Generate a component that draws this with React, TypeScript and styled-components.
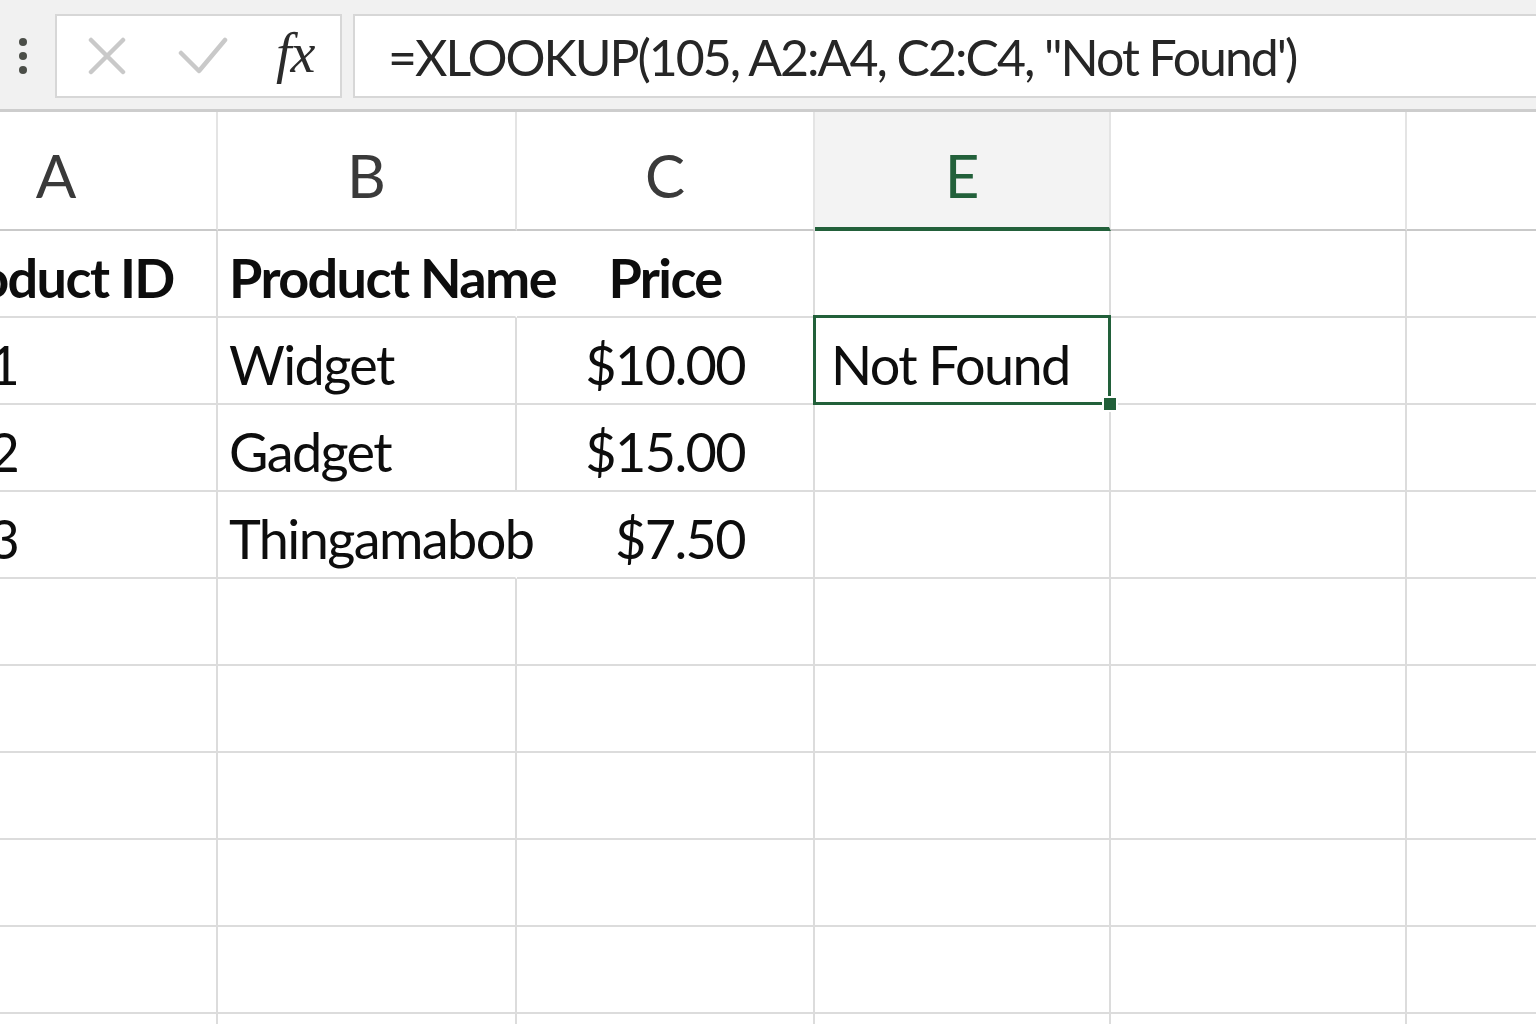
import React from 'react';
import styled, { createGlobalStyle, css } from 'styled-components';

const GREEN = '#22603a';
const GRID = '#dcdcdc';
const FONT = `Lato, "Open Sans", "Liberation Sans", sans-serif`;

const GlobalStyle = createGlobalStyle`
  html, body {
    margin: 0;
    padding: 0;
    background: #ffffff;
    overflow: hidden;
  }
  body {
    font-family: ${FONT};
    color: #111;
  }
`;

type Align = 'left' | 'right' | 'center';

interface IColumn {
  key: string;
  width: number;
  align: Align;
  padLeft: number;
  padRight: number;
  labelShift?: number;
}

const columns: IColumn[] = [
  { key: 'A', width: 300, align: 'left', padLeft: 11, padRight: 11, labelShift: 22 },
  { key: 'B', width: 299, align: 'left', padLeft: 11, padRight: 11 },
  { key: 'C', width: 298, align: 'right', padLeft: 11, padRight: 68 },
  { key: 'E', width: 296, align: 'left', padLeft: 16, padRight: 11 },
  { key: '', width: 296, align: 'left', padLeft: 11, padRight: 11 },
  { key: '', width: 296, align: 'left', padLeft: 11, padRight: 11 },
];

const rows: string[][] = [
  ['Product ID', 'Product Name', 'Price', '', '', ''],
  ['101', 'Widget', '$10.00', 'Not Found', '', ''],
  ['102', 'Gadget', '$15.00', '', '', ''],
  ['103', 'Thingamabob', '$7.50', '', '', ''],
  ['', '', '', '', '', ''],
  ['', '', '', '', '', ''],
  ['', '', '', '', '', ''],
  ['', '', '', '', '', ''],
  ['', '', '', '', '', ''],
  ['', '', '', '', '', ''],
];

// overflowing text hides the gridline on its right
const spills = new Set(['0-1', '3-1']);
const selected = '1-3';

const Page = styled.div`
  width: 1536px;
  height: 1024px;
  overflow: hidden;
  display: flex;
  flex-direction: column;
`;

const Toolbar = styled.div`
  flex: none;
  height: 112px;
  box-sizing: border-box;
  padding-top: 14px;
  display: flex;
  align-items: flex-start;
  background: #f1f1f1;
  border-bottom: 3px solid #cdcdcd;
`;

const Grip = styled.div`
  width: 46px;
  height: 84px;
  display: flex;
  flex-direction: column;
  align-items: center;
  justify-content: center;
  gap: 6px;
`;

const Dot = styled.span`
  width: 8px;
  height: 8px;
  border-radius: 50%;
  background: #4b4e48;
`;

const EditBox = styled.div`
  margin-left: 9px;
  width: 287px;
  height: 84px;
  box-sizing: border-box;
  background: #ffffff;
  border: 2px solid #d7d7d7;
  display: flex;
  align-items: center;
  padding-left: 31px;
`;

const IconSlot = styled.span<{ $gap: number }>`
  display: flex;
  align-items: center;
  margin-right: ${({ $gap }) => $gap}px;
`;

const Fx = styled.span`
  font-family: "Liberation Serif", "DejaVu Serif", serif;
  font-style: italic;
  font-size: 56px;
  line-height: 1;
  color: #2b2b2b;
  margin-top: -6px;
  letter-spacing: -1px;
`;

const FormulaBox = styled.div`
  margin-left: 11px;
  margin-right: -6px;
  flex: 1;
  height: 84px;
  box-sizing: border-box;
  background: #ffffff;
  border: 2px solid #d7d7d7;
  display: flex;
  align-items: center;
  padding-left: 33px;
`;

const FormulaText = styled.span`
  font-size: 50px;
  letter-spacing: -2px;
  color: #262626;
  white-space: nowrap;
  margin-top: 2px;
`;

const Viewport = styled.div`
  flex: 1;
  overflow: hidden;
`;

const Sheet = styled.div<{ $template: string }>`
  display: grid;
  grid-template-columns: ${({ $template }) => $template};
  grid-template-rows: 119px;
  grid-auto-rows: 87px;
  margin-left: -82px;
  width: max-content;
`;

const HeaderCell = styled.div<{ $active: boolean; $shift: number }>`
  box-sizing: border-box;
  display: flex;
  align-items: center;
  justify-content: center;
  padding-top: 8px;
  padding-right: ${({ $shift }) => $shift}px;
  font-size: 60px;
  color: #3a3a3a;
  border-right: 2px solid #e4e4e4;
  border-bottom: 2px solid #c9c9c9;
  background: #ffffff;
  ${({ $active }) =>
    $active &&
    css`
      background: #f3f3f3;
      color: ${GREEN};
      border-bottom: 4px solid ${GREEN};
      padding-top: 10px;
    `}
`;

const Cell = styled.div<{
  $align: Align;
  $bold: boolean;
  $spill: boolean;
  $active: boolean;
  $padLeft: number;
  $padRight: number;
}>`
  position: relative;
  box-sizing: border-box;
  display: flex;
  align-items: center;
  justify-content: ${({ $align }) =>
    $align === 'right' ? 'flex-end' : $align === 'center' ? 'center' : 'flex-start'};
  padding: 8px ${({ $padRight }) => $padRight}px 0 ${({ $padLeft }) => $padLeft}px;
  font-size: 54px;
  font-weight: ${({ $bold }) => ($bold ? 700 : 400)};
  letter-spacing: -1.6px;
  color: #0d0d0d;
  white-space: nowrap;
  border-right: 2px solid ${({ $spill }) => ($spill ? 'transparent' : GRID)};
  border-bottom: 2px solid ${GRID};
  overflow: ${({ $spill, $active }) => ($spill || $active ? 'visible' : 'hidden')};
  z-index: ${({ $spill, $active }) => ($active ? 2 : $spill ? 1 : 0)};
`;

const SelectionFrame = styled.div`
  position: absolute;
  top: -3px;
  left: -2px;
  right: -2px;
  bottom: -2px;
  border: 3px solid ${GREEN};
  pointer-events: none;
`;

const FillHandle = styled.span`
  position: absolute;
  right: -10px;
  bottom: -10px;
  width: 12px;
  height: 12px;
  background: ${GREEN};
  border: 2px solid #ffffff;
`;

const CloseIcon = () => (
  <svg width="38" height="38" viewBox="0 0 38 38">
    <path d="M3 3 L35 35 M35 3 L3 35" stroke="#c9c9c9" strokeWidth="4.5" strokeLinecap="round" />
  </svg>
);

const CheckIcon = () => (
  <svg width="50" height="38" viewBox="0 0 50 38">
    <path d="M3 16 L21 34 L47 3" fill="none" stroke="#c9c9c9" strokeWidth="4.5" strokeLinecap="round" strokeLinejoin="round" />
  </svg>
);

const App = () => {
  const template = columns.map((c) => `${c.width}px`).join(' ');

  return (
    <Page>
      <GlobalStyle />
      <Toolbar>
        <Grip>
          <Dot />
          <Dot />
          <Dot />
        </Grip>
        <EditBox>
          <IconSlot $gap={52}>
            <CloseIcon />
          </IconSlot>
          <IconSlot $gap={48}>
            <CheckIcon />
          </IconSlot>
          <Fx>fx</Fx>
        </EditBox>
        <FormulaBox>
          <FormulaText>=XLOOKUP(105, A2:A4, C2:C4, "Not Found')</FormulaText>
        </FormulaBox>
      </Toolbar>

      <Viewport>
        <Sheet $template={template}>
          {columns.map((col, idx) => (
            <HeaderCell key={`h-${idx}`} $active={col.key === 'E'} $shift={col.labelShift || 0}>
              {col.key}
            </HeaderCell>
          ))}
          {rows.map((row, r) =>
            row.map((value, c) => {
              const col = columns[c];
              const id = `${r}-${c}`;
              const align: Align = r === 0 && col.key === 'C' ? 'center' : col.align;
              return (
                <Cell
                  key={id}
                  $align={align}
                  $bold={r === 0}
                  $spill={spills.has(id)}
                  $active={id === selected}
                  $padLeft={align === 'center' ? 0 : col.padLeft}
                  $padRight={align === 'center' ? 0 : col.padRight}
                >
                  {value}
                  {id === selected && (
                    <SelectionFrame>
                      <FillHandle />
                    </SelectionFrame>
                  )}
                </Cell>
              );
            })
          )}
        </Sheet>
      </Viewport>
    </Page>
  );
};

export default App;
